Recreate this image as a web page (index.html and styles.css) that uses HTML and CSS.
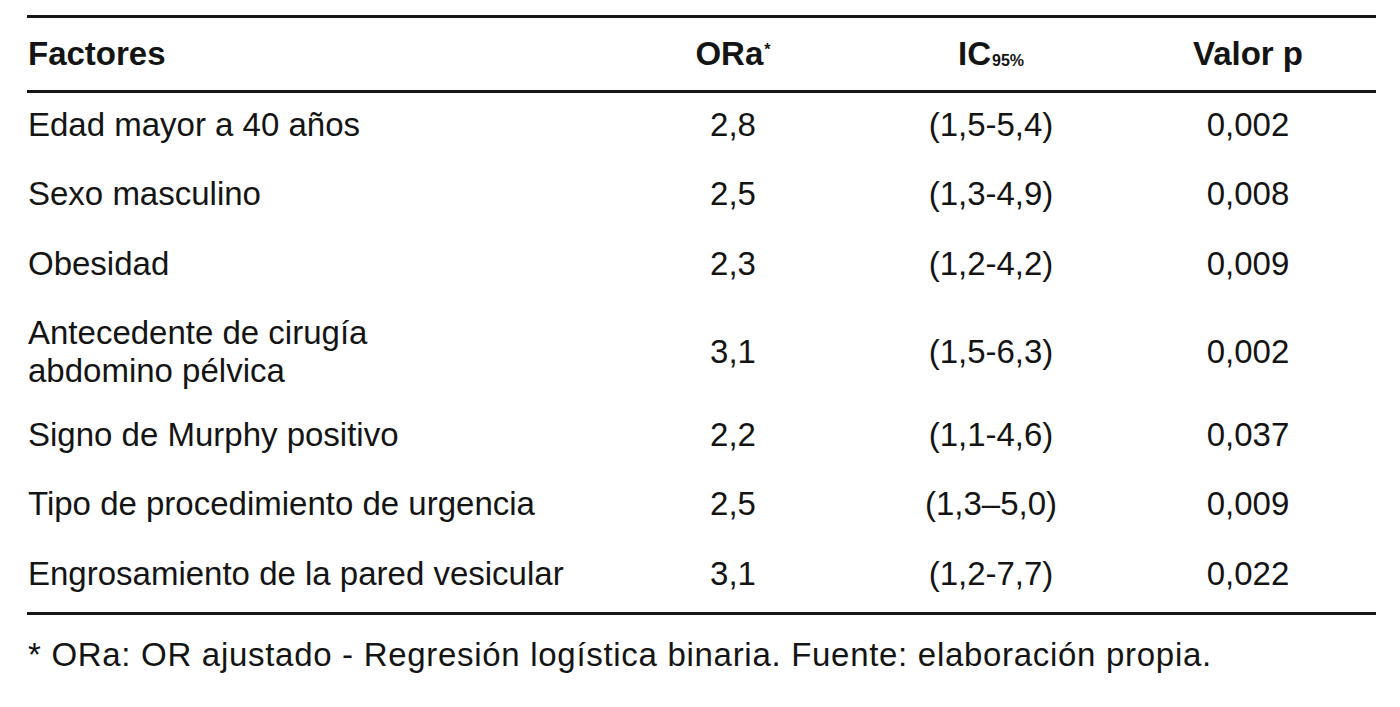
FILE: index.html
```html
<!DOCTYPE html>
<html lang="es">
<head>
<meta charset="utf-8">
<title>Factores</title>
<link rel="stylesheet" href="styles.css">
</head>
<body>
<div class="page">
  <table class="data">
    <colgroup>
      <col class="c1"><col class="c2"><col class="c3"><col class="c4">
    </colgroup>
    <thead>
      <tr>
        <th class="left">Factores</th>
        <th>ORa<sup>*</sup></th>
        <th>IC<sub>95%</sub></th>
        <th>Valor p</th>
      </tr>
    </thead>
    <tbody>
      <tr><td class="left">Edad mayor a 40 años</td><td>2,8</td><td>(1,5-5,4)</td><td>0,002</td></tr>
      <tr><td class="left">Sexo masculino</td><td>2,5</td><td>(1,3-4,9)</td><td>0,008</td></tr>
      <tr><td class="left">Obesidad</td><td>2,3</td><td>(1,2-4,2)</td><td>0,009</td></tr>
      <tr class="tall"><td class="left">Antecedente de cirugía<br>abdomino pélvica</td><td>3,1</td><td>(1,5-6,3)</td><td>0,002</td></tr>
      <tr><td class="left">Signo de Murphy positivo</td><td>2,2</td><td>(1,1-4,6)</td><td>0,037</td></tr>
      <tr><td class="left">Tipo de procedimiento de urgencia</td><td>2,5</td><td>(1,3–5,0)</td><td>0,009</td></tr>
      <tr><td class="left">Engrosamiento de la pared vesicular</td><td>3,1</td><td>(1,2-7,7)</td><td>0,022</td></tr>
    </tbody>
  </table>
  <p class="note">* ORa: OR ajustado - Regresión logística binaria. Fuente: elaboración propia.</p>
</div>
</body>
</html>
```

FILE: styles.css
```css
html, body {
  margin: 0;
  padding: 0;
  background: #ffffff;
}

body {
  font-family: "Liberation Sans", Arial, sans-serif;
  color: #141414;
}

.page {
  padding-top: 15px;
  padding-left: 27px;
}

.data {
  border-collapse: collapse;
  table-layout: fixed;
  width: 1349px;
  border-top: 3px solid #161616;
  border-bottom: 3px solid #161616;
}

.c1 { width: 577px; }
.c2 { width: 258px; }
.c3 { width: 258px; }
.c4 { width: 256px; }

.data th,
.data td {
  font-size: 33px;
  line-height: 38px;
  text-align: center;
  vertical-align: middle;
  padding: 0;
  white-space: nowrap;
}

.data th {
  font-weight: bold;
  padding-top: 17px;
  padding-bottom: 17px;
  border-bottom: 3px solid #161616;
}

.data td {
  font-weight: normal;
  padding-top: 12.5px;
  padding-bottom: 19px;
}

.data tr.tall td {
  padding-bottom: 13px;
}

.data .left {
  text-align: left;
  padding-left: 1px;
}

.data sup {
  font-size: 16px;
  line-height: 0;
  vertical-align: 10px;
  margin-left: 1px;
}

.data sub {
  font-size: 16px;
  line-height: 0;
  vertical-align: -1px;
  margin-left: 1px;
}

.note {
  margin: 21px 0 0 1px;
  font-size: 33px;
  line-height: 38px;
  letter-spacing: 0.7px;
}
```
